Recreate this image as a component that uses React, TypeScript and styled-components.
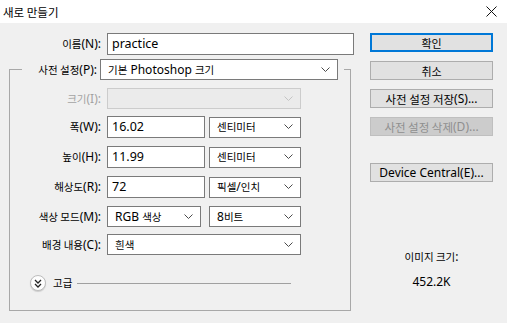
import React from "react";
import styled, { createGlobalStyle } from "styled-components";

const GlobalStyle = createGlobalStyle`
  html, body {
    margin: 0;
    padding: 0;
    background: #f0f0f0;
  }
  body {
    font-family: "Noto Sans", "Noto Sans CJK KR", sans-serif;
    font-size: 12px;
    color: #000;
  }
`;

// hangul runs are drawn a little smaller than the latin text, like the Windows UI font
const Hangul = styled.span<{ $size?: number }>`
  font-family: "Noto Sans CJK KR", sans-serif;
  font-size: ${(p) => p.$size ?? 10.5}px;
`;

const HANGUL_RUN = /([\u3130-\u318f\uac00-\ud7a3]+(?: [\u3130-\u318f\uac00-\ud7a3]+)*)/;

const Txt = ({ children, ko }: { children: string; ko?: number }) => (
  <>
    {children.split(HANGUL_RUN).map((part, i) =>
      i % 2 === 1 ? (
        <Hangul key={i} $size={ko}>
          {part}
        </Hangul>
      ) : (
        part
      )
    )}
  </>
);

const Window = styled.div`
  width: 507px;
  height: 323px;
  background: #f0f0f0;
  overflow: hidden;
`;

const TitleBar = styled.div`
  height: 23px;
  background: #fff;
  display: flex;
  align-items: center;
  justify-content: space-between;
  padding: 0 10px 0 3px;
`;

const Title = styled.span`
  font-family: "Noto Sans CJK KR", sans-serif;
  font-size: 11.5px;
  line-height: 14px;
`;

const Body = styled.div`
  display: flex;
  padding-top: 10px;
`;

const Main = styled.div`
  width: 355px;
`;

const Side = styled.div`
  margin-left: 15px;
  width: 123px;
  display: flex;
  flex-direction: column;
`;

const Row = styled.div<{ $mt?: number }>`
  display: flex;
  align-items: center;
  margin-top: ${(p) => p.$mt ?? 0}px;
`;

const Label = styled.label<{ $w?: number; $gap?: number; $disabled?: boolean }>`
  width: ${(p) => p.$w ?? 91}px;
  margin-right: ${(p) => p.$gap ?? 6}px;
  text-align: right;
  line-height: 14px;
  white-space: nowrap;
  color: ${(p) => (p.$disabled ? "#a3a3a3" : "#000")};
`;

const TextBox = styled.div<{ $w: number }>`
  width: ${(p) => p.$w}px;
  height: 22px;
  box-sizing: border-box;
  border: 1px solid #7a7a7a;
  background: #fff;
  padding: 0 4px;
  display: flex;
  align-items: center;
  font-size: 12.5px;
  line-height: 16px;
`;

const SelectBox = styled.div<{ $w: number; $disabled?: boolean }>`
  width: ${(p) => p.$w}px;
  height: 21px;
  box-sizing: border-box;
  border: 1px solid ${(p) => (p.$disabled ? "#cccccc" : "#7a7a7a")};
  background: ${(p) => (p.$disabled ? "#ebebeb" : "#fff")};
  padding: 0 7px 0 7px;
  display: flex;
  align-items: center;
  justify-content: space-between;
  line-height: 14px;
  flex: none;
`;

const Gap = styled.div<{ $w: number }>`
  width: ${(p) => p.$w}px;
  flex: none;
`;

const Group = styled.fieldset`
  margin: 4px 0 0 9px;
  width: 342px;
  box-sizing: border-box;
  border: 1px solid #a8a8a8;
  padding: 0 0 19px 0;
`;

const Legend = styled.legend`
  margin-left: 12px;
  padding: 0 6px 0 0;
  display: flex;
  align-items: center;
`;

const Advanced = styled.div`
  display: flex;
  align-items: center;
  margin-top: 20px;
  padding-left: 20px;
`;

const Toggle = styled.div`
  width: 14px;
  height: 14px;
  border-radius: 50%;
  background: #fdfdfd;
  border: 1px solid #bdbdbd;
  box-shadow: 0 1px 1px rgba(0, 0, 0, 0.15);
  display: flex;
  align-items: center;
  justify-content: center;
`;

const AdvText = styled.span`
  margin-left: 7px;
  line-height: 14px;
`;

const Rule = styled.div`
  margin-left: 5px;
  width: 214px;
  height: 1px;
  background: #a0a0a0;
`;

const Button = styled.div<{ $mt?: number; $primary?: boolean; $disabled?: boolean }>`
  height: 19px;
  box-sizing: border-box;
  margin-top: ${(p) => p.$mt ?? 0}px;
  background: ${(p) => (p.$disabled ? "#cccccc" : "#e1e1e1")};
  border: ${(p) =>
    p.$primary ? "2px solid #0078d7" : p.$disabled ? "1px solid #bfbfbf" : "1px solid #adadad"};
  color: ${(p) => (p.$disabled ? "#8f8f8f" : "#000")};
  display: flex;
  align-items: center;
  justify-content: center;
  line-height: 14px;
  white-space: nowrap;
`;

const SizeInfo = styled.div<{ $mt?: number }>`
  margin-top: ${(p) => p.$mt ?? 0}px;
  text-align: center;
  line-height: 14px;
`;

const Chevron = ({ light }: { light?: boolean }) => (
  <svg width="9" height="6" viewBox="0 0 9 6">
    <polyline
      points="0.5,0.5 4.5,4.5 8.5,0.5"
      fill="none"
      stroke={light ? "#c4c4c4" : "#4a4a4a"}
      strokeWidth="1"
    />
  </svg>
);

const Select = ({
  w,
  value,
  disabled,
}: {
  w: number;
  value?: string;
  disabled?: boolean;
}) => (
  <SelectBox $w={w} $disabled={disabled}>
    <span>{value ? <Txt>{value}</Txt> : null}</span>
    <Chevron light={disabled} />
  </SelectBox>
);

export default function App() {
  return (
    <Window>
      <GlobalStyle />
      <TitleBar>
        <Title>새로 만들기</Title>
        <svg width="11" height="11" viewBox="0 0 11 11">
          <path d="M0.5 0.5 L10.5 10.5 M10.5 0.5 L0.5 10.5" stroke="#111" strokeWidth="1" />
        </svg>
      </TitleBar>
      <Body>
        <Main>
          <Row>
            <Label $w={101}>
              <Txt>이름(N):</Txt>
            </Label>
            <TextBox $w={247}>practice</TextBox>
          </Row>
          <Group>
            <Legend>
              <Label $w={75} $gap={3}>
                <Txt>사전 설정(P):</Txt>
              </Label>
              <Select w={238} value="기본 Photoshop 크기" />
            </Legend>
            <Row $mt={8}>
              <Label $disabled>
                <Txt>크기(I):</Txt>
              </Label>
              <Select w={194} disabled />
            </Row>
            <Row $mt={7}>
              <Label>
                <Txt>폭(W):</Txt>
              </Label>
              <TextBox $w={98}>16.02</TextBox>
              <Gap $w={4} />
              <Select w={92} value="센티미터" />
            </Row>
            <Row $mt={8}>
              <Label>
                <Txt>높이(H):</Txt>
              </Label>
              <TextBox $w={98}>11.99</TextBox>
              <Gap $w={4} />
              <Select w={92} value="센티미터" />
            </Row>
            <Row $mt={8}>
              <Label>
                <Txt>해상도(R):</Txt>
              </Label>
              <TextBox $w={98}>72</TextBox>
              <Gap $w={4} />
              <Select w={92} value="픽셀/인치" />
            </Row>
            <Row $mt={8}>
              <Label>
                <Txt>색상 모드(M):</Txt>
              </Label>
              <Select w={94} value="RGB 색상" />
              <Gap $w={8} />
              <Select w={92} value="8비트" />
            </Row>
            <Row $mt={7}>
              <Label>
                <Txt>배경 내용(C):</Txt>
              </Label>
              <Select w={194} value="흰색" />
            </Row>
            <Advanced>
              <Toggle>
                <svg width="8" height="9" viewBox="0 0 8 9">
                  <polyline points="1,1 4,4 7,1" fill="none" stroke="#222" strokeWidth="1.3" />
                  <polyline points="1,5 4,8 7,5" fill="none" stroke="#222" strokeWidth="1.3" />
                </svg>
              </Toggle>
              <AdvText>
                <Txt>고급</Txt>
              </AdvText>
              <Rule />
            </Advanced>
          </Group>
        </Main>
        <Side>
          <Button $primary>
            <Txt ko={11}>확인</Txt>
          </Button>
          <Button $mt={9}>
            <Txt ko={11}>취소</Txt>
          </Button>
          <Button $mt={9}>
            <Txt ko={11.5}>사전 설정 저장(S)...</Txt>
          </Button>
          <Button $mt={9} $disabled>
            <Txt ko={11.5}>사전 설정 삭제(D)...</Txt>
          </Button>
          <Button $mt={27}>Device Central(E)...</Button>
          <SizeInfo $mt={68}>
            <Txt>이미지 크기:</Txt>
          </SizeInfo>
          <SizeInfo $mt={11}>452.2K</SizeInfo>
        </Side>
      </Body>
    </Window>
  );
}
